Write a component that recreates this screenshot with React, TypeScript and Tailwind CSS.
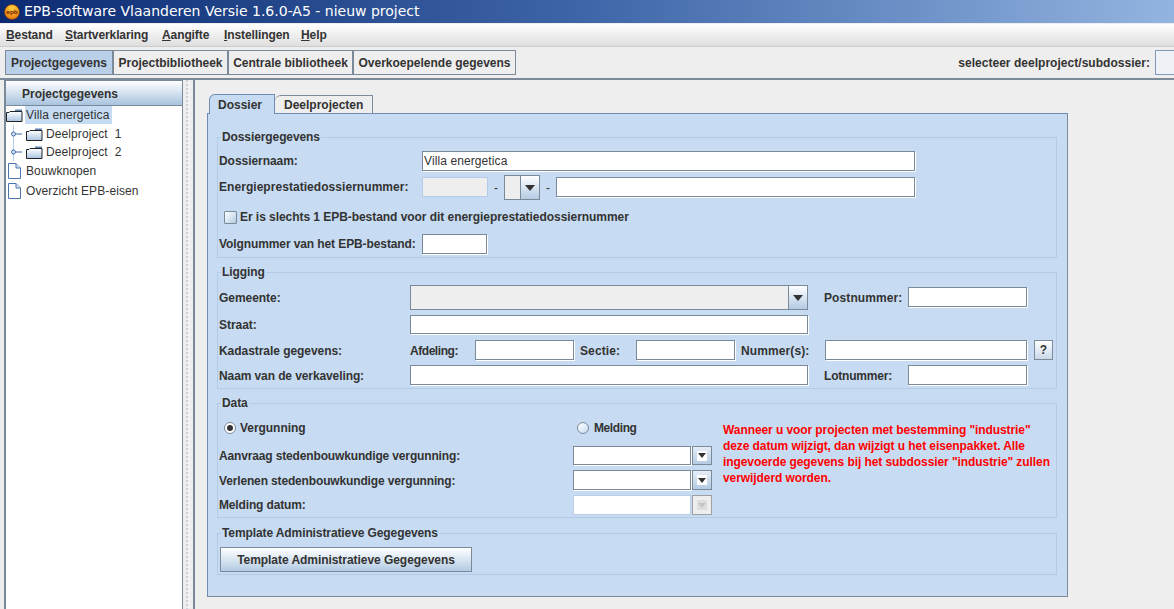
import type { ReactNode } from "react";

const line = "border-[#7a8a99]";

function Label({ children, width, className = "", tracking = "tracking-[-0.05px]" }: { children: ReactNode; width?: string; className?: string; tracking?: string }) {
  return <span className={`shrink-0 whitespace-nowrap text-[12px] font-bold text-[#333333] ${tracking} ${width ?? ""} ${className}`}>{children}</span>;
}

function Input({ width, height = "h-[20px]", value, className = "" }: { width: string; height?: string; value?: string; className?: string }) {
  return (
    <div className={`box-border flex shrink-0 items-center border ${line} bg-white pl-[1px] text-[12px] tracking-[0.1px] text-[#333333] shadow-[1px_1px_0_#ffffff] ${width} ${height} ${className}`}>
      {value}
    </div>
  );
}

function Arrow({ disabled = false, small = false }: { disabled?: boolean; small?: boolean }) {
  return (
    <svg width={small ? 8 : 10} height={small ? 5 : 6} viewBox="0 0 10 6" className="shrink-0" preserveAspectRatio="none">
      <path d="M0 0h10L5 6z" fill={disabled ? "#c4c4c4" : "#333333"} />
    </svg>
  );
}

function ArrowButton({ height, disabled = false }: { height: string; disabled?: boolean }) {
  return (
    <div className={`box-border flex w-[20px] shrink-0 items-center justify-center border ${disabled ? "border-[#a0a0a0] bg-[#eeeeee]" : `${line} bg-gradient-to-b from-[#e6eef7] to-[#b3cbe3]`} ${height}`}>
      <div className={`flex size-[10px] items-center justify-center ${disabled ? "bg-[#dedede]" : "bg-white"}`}>
        <Arrow disabled={disabled} small />
      </div>
    </div>
  );
}

function DateField({ disabled = false, height }: { disabled?: boolean; height: string }) {
  return (
    <div className="flex items-center gap-[1px]">
      <div className={`box-border w-[118px] border bg-white ${disabled ? "border-[#b8cfe6]" : `${line} shadow-[1px_1px_0_#ffffff]`} ${height}`} />
      <ArrowButton height={height} disabled={disabled} />
    </div>
  );
}

function Group({ title, height, children }: { title: string; height: string; children: ReactNode }) {
  return (
    <fieldset className={`m-0 box-border min-w-0 w-[840px] border border-[#b3cbe6] p-0 pl-px ${height}`}>
      <legend className="ml-[2px] h-[13px] px-px text-[12px] leading-[13px] font-bold tracking-[-0.1px] text-[#333333]">{title}</legend>
      {children}
    </fieldset>
  );
}

function Folder() {
  return (
    <svg width="17" height="13" viewBox="0 0 17 13" className="shrink-0">
      <defs>
        <linearGradient id="folderFill" x1="0" y1="0" x2="0" y2="1">
          <stop offset="0" stopColor="#ffffff" />
          <stop offset="1" stopColor="#a9c4e2" />
        </linearGradient>
      </defs>
      <path d="M9 0.500h7v2.500h-7z" fill="#5d82b5" />
      <path d="M0.500 3.500h2.500l1-1h12v10h-15.500z" fill="url(#folderFill)" stroke="#222222" />
    </svg>
  );
}

function Page() {
  return (
    <svg width="13" height="16" viewBox="0 0 13 16" className="shrink-0">
      <path d="M0.500 0.500h7.500l4.500 4.500v10.500h-12z" fill="#ffffff" stroke="#4c76ab" />
      <path d="M8 0.500v4.500h4.500" fill="#d7e5f4" stroke="#4c76ab" />
    </svg>
  );
}

function TreeHandle() {
  return (
    <svg width="14" height="18" viewBox="0 0 14 18" className="shrink-0">
      <path d="M3.500 0v18" stroke="#b3cbe6" />
      <path d="M6 9h6" stroke="#3f66a8" />
      <circle cx="3.500" cy="9" r="2" fill="#dbe7f5" stroke="#3f66a8" />
    </svg>
  );
}

function Logo() {
  return (
    <svg width="16" height="16" viewBox="0 0 16 16" className="shrink-0">
      <defs>
        <radialGradient id="logoFill" cx="0.500" cy="0.250" r="0.800">
          <stop offset="0" stopColor="#ffd040" />
          <stop offset="1" stopColor="#e8720c" />
        </radialGradient>
      </defs>
      <circle cx="8" cy="8" r="7.500" fill="url(#logoFill)" stroke="#6b3a12" strokeWidth="0.700" />
      <text x="8" y="10" textAnchor="middle" fontSize="5.500" fontWeight="700" fill="#7a2d05">epb</text>
    </svg>
  );
}

const menuItems = [
  { key: "B", rest: "estand", cls: "w-[59px]" },
  { key: "S", rest: "tartverklaring", cls: "w-[97px]" },
  { key: "A", rest: "angifte", cls: "w-[62px]" },
  { key: "I", rest: "nstellingen", cls: "w-[77px]" },
  { key: "H", rest: "elp", cls: "w-[30px]" },
];

const toolbarItems = [
  { text: "Projectgegevens", cls: "w-[108px] bg-[#b9d0e8]" },
  { text: "Projectbibliotheek", cls: "w-[115px] bg-[#eeeeee]" },
  { text: "Centrale bibliotheek", cls: "w-[125px] bg-[#eeeeee]" },
  { text: "Overkoepelende gegevens", cls: "w-[163px] bg-[#eeeeee]" },
];

export default function App() {
  return (
    <div className="flex h-[609px] w-[1174px] flex-col overflow-hidden bg-[#eeeeee] font-['Liberation_Sans',Arial,sans-serif]">
      <header className="flex h-[23px] shrink-0 items-center gap-[4px] bg-gradient-to-r from-[#0c2a72] via-[#3f66a8] to-[#94b4e0] pl-[4px] font-['DejaVu_Sans',sans-serif] text-[14px] text-white">
        <Logo />
        <span className="whitespace-nowrap">EPB-software Vlaanderen Versie 1.6.0-A5 - nieuw project</span>
      </header>

      <nav className="mt-px flex h-[22px] shrink-0 items-center bg-gradient-to-b from-white to-[#dedede] pl-[6px] text-[12px] font-bold tracking-[-0.1px] text-[#333333]">
        {menuItems.map((item) => (
          <span key={item.key} className={`whitespace-nowrap ${item.cls}`}>
            <span className="underline">{item.key}</span>
            {item.rest}
          </span>
        ))}
      </nav>

      <div className={`box-border flex h-[34px] shrink-0 items-start justify-between border-t border-t-[#cccccc] border-b-2 ${line} pt-[3px] pl-[5px]`}>
        <div className="flex">
          {toolbarItems.map((item) => (
            <button key={item.text} className={`box-border h-[25px] border ${line} pt-px text-center text-[12px] font-bold whitespace-nowrap text-[#333333] ${item.cls}`}>
              {item.text}
            </button>
          ))}
        </div>
        <div className="mr-[-21px] flex h-[25px] items-center gap-[5px]">
          <Label tracking="tracking-[0.03px]" className="pt-px">selecteer deelproject/subdossier:</Label>
          <div className="box-border h-[25px] w-[40px] border border-[#7f9ab8] bg-[#eef1f6]" />
        </div>
      </div>

      <div className="flex min-h-0 flex-1">
        <aside className={`ml-[4px] flex w-[179px] shrink-0 flex-col border-t border-r border-l-2 ${line} bg-white`}>
          <div className={`flex h-[25px] shrink-0 items-center border-b ${line} bg-gradient-to-b from-white to-[#a9c3de] pt-px pl-[16px] text-[12px] font-bold text-[#333333]`}>
            Projectgegevens
          </div>
          <ul className="text-[12px] tracking-[0.1px] text-[#333333]">
            <li className="flex h-[18px] items-center gap-[2px]">
              <Folder />
              <span className="flex h-[18px] items-center bg-[#c6dcf2] pr-[3px] pl-px">Villa energetica</span>
            </li>
            <li className="mt-px flex h-[18px] items-center gap-[2px] pl-[4px]">
              <TreeHandle />
              <Folder />
              <span className="ml-px">Deelproject&nbsp; 1</span>
            </li>
            <li className="flex h-[18px] items-center gap-[2px] pl-[4px]">
              <TreeHandle />
              <Folder />
              <span className="ml-px">Deelproject&nbsp; 2</span>
            </li>
            <li className="flex h-[19px] items-center gap-[5px] pl-[2px]">
              <Page />
              Bouwknopen
            </li>
            <li className="mt-px flex h-[19px] items-center gap-[5px] pl-[2px]">
              <Page />
              Overzicht EPB-eisen
            </li>
          </ul>
        </aside>

        <div className="flex w-[10px] shrink-0 justify-center">
          <div className="h-full w-[4px] bg-[radial-gradient(circle_at_1px_1px,#a3b6cc_0.600px,transparent_0.800px),radial-gradient(circle_at_3px_3px,#ffffff_0.600px,transparent_0.800px)] bg-[length:4px_4px]" />
        </div>

        <main className={`flex-1 border-l-2 ${line} pt-[14px] pl-[12px]`}>
          <div className="ml-[2px] flex h-[19px] items-end">
            <div className="relative z-10 box-border flex h-[20px] w-[66px] translate-y-px items-center rounded-tl-[6px] border border-b-0 border-[#6f8cb5] bg-[#c7dcf2] pl-[8px] text-[12px] font-bold text-[#333333]">
              Dossier
            </div>
            <div className={`box-border flex h-[18px] w-[98px] items-center rounded-tl-[6px] border border-b-0 border-l-0 ${line} bg-[#eeeeee] pl-[9px] text-[12px] font-bold text-[#333333]`}>
              Deelprojecten
            </div>
          </div>

          <section className="box-border h-[484px] w-[861px] border border-[#6f8cb5] border-r-[#7a8a99] border-b-[#7a8a99] bg-[#c7dcf2] pt-[17px] pl-[9px]">
            <Group title="Dossiergegevens" height="h-[127px]">
              <div className="mt-[7px] flex h-[20px] items-center">
                <Label width="w-[203px]">Dossiernaam:</Label>
                <Input width="w-[493px]" value="Villa energetica" />
              </div>
              <div className="mt-[4px] flex h-[25px] items-center">
                <Label width="w-[203px]" className="pb-px" tracking="tracking-[0.05px]">Energieprestatiedossiernummer:</Label>
                <div className="mb-px box-border h-[20px] w-[66px] border border-[#b3cbe6] bg-[#eeeeee]" />
                <span className="w-[16px] text-center text-[12px] text-[#333333]">-</span>
                <div className={`box-border flex h-[25px] w-[36px] border ${line}`}>
                  <div className={`w-[16px] border-r ${line} bg-[#eeeeee]`} />
                  <div className="flex flex-1 items-center justify-center bg-gradient-to-b from-white to-[#b3cbe3]">
                    <Arrow />
                  </div>
                </div>
                <span className="w-[16px] text-center text-[12px] text-[#333333]">-</span>
                <Input width="w-[359px]" className="mb-px" />
              </div>
              <div className="mt-[9px] flex h-[16px] items-center pl-[5px]">
                <div className="box-border size-[13px] rounded-[1px] border border-[#7a8a99] bg-gradient-to-br from-white to-[#b3cbe3]" />
                <Label className="ml-[3px]">Er is slechts 1 EPB-bestand voor dit energieprestatiedossiernummer</Label>
              </div>
              <div className="mt-[9px] flex h-[20px] items-center">
                <Label width="w-[203px]" tracking="tracking-[-0.1px]">Volgnummer van het EPB-bestand:</Label>
                <Input width="w-[65px]" />
              </div>
            </Group>

            <div className="h-[8px]" />

            <Group title="Ligging" height="h-[123px]">
              <div className="mt-[6px] flex h-[25px] items-center">
                <Label width="w-[191px]">Gemeente:</Label>
                <div className={`box-border flex h-[25px] w-[398px] border ${line}`}>
                  <div className={`flex-1 border-r ${line} bg-[#eeeeee]`} />
                  <div className="flex w-[18px] items-center justify-center bg-gradient-to-b from-white to-[#b3cbe3]">
                    <Arrow />
                  </div>
                </div>
                <Label width="w-[84px]" className="ml-[16px]" tracking="tracking-[0.1px]">Postnummer:</Label>
                <Input width="w-[119px]" className="mb-px" />
              </div>
              <div className="mt-[5px] flex h-[19px] items-center">
                <Label width="w-[191px]">Straat:</Label>
                <Input width="w-[398px]" height="h-[19px]" />
              </div>
              <div className="mt-[6px] flex h-[20px] items-center">
                <Label width="w-[191px]" className="pt-[2px]">Kadastrale gegevens:</Label>
                <Label width="w-[65px]" className="pt-[2px]" tracking="tracking-[-0.45px]">Afdeling:</Label>
                <Input width="w-[99px]" />
                <Label width="w-[56px]" className="ml-[6px] pt-[2px]" tracking="tracking-[0.1px]">Sectie:</Label>
                <Input width="w-[99px]" />
                <Label width="w-[84px]" className="ml-[6px] pt-[2px]" tracking="tracking-[0.1px]">Nummer(s):</Label>
                <Input width="w-[202px]" />
                <button className={`ml-[7px] box-border h-[20px] w-[19px] border ${line} bg-gradient-to-b from-white to-[#c8d8e8] text-[12px] font-bold text-[#333333]`}>?</button>
              </div>
              <div className="mt-[5px] flex h-[20px] items-center">
                <Label width="w-[191px]" className="pt-[2px]" tracking="tracking-[-0.1px]">Naam van de verkaveling:</Label>
                <Input width="w-[398px]" />
                <Label width="w-[84px]" className="ml-[16px] pt-[2px]" tracking="tracking-[-0.2px]">Lotnummer:</Label>
                <Input width="w-[119px]" />
              </div>
            </Group>

            <div className="h-[8px]" />

            <Group title="Data" height="h-[121px]">
              <div className="flex">
                <div className="w-[504px]">
                  <div className="mt-[10px] flex h-[16px] items-center">
                    <div className="ml-[5px] flex w-[353px] items-center">
                      <div className="box-border flex size-[12px] items-center justify-center rounded-full border border-[#7a8a99] bg-white">
                        <div className="size-[6px] rounded-full bg-[#333333]" />
                      </div>
                      <Label className="ml-[4px]">Vergunning</Label>
                    </div>
                    <div className="box-border size-[12px] rounded-full border border-[#7a8a99] bg-gradient-to-br from-white to-[#c7dcf2]" />
                    <Label className="ml-[5px]" tracking="tracking-[-0.4px]">Melding</Label>
                  </div>
                  <div className="mt-[10px] flex h-[19px] items-center">
                    <Label width="w-[354px]" tracking="tracking-[-0.15px]">Aanvraag stedenbouwkundige vergunning:</Label>
                    <DateField height="h-[19px]" />
                  </div>
                  <div className="mt-[5px] flex h-[20px] items-center">
                    <Label width="w-[354px]" className="pt-[2px]" tracking="tracking-[-0.15px]">Verlenen stedenbouwkundige vergunning:</Label>
                    <DateField height="h-[20px]" />
                  </div>
                  <div className="mt-[5px] flex h-[20px] items-center">
                    <Label width="w-[354px]" tracking="tracking-[-0.15px]">Melding datum:</Label>
                    <DateField disabled height="h-[20px]" />
                  </div>
                </div>
                <p className="mt-[12px] text-[12px] leading-[16px] font-bold tracking-[-0.08px] whitespace-nowrap text-[#ff0000]">
                  Wanneer u voor projecten met bestemming "industrie"
                  <br />
                  deze datum wijzigt, dan wijzigt u het eisenpakket. Alle
                  <br />
                  ingevoerde gegevens bij het subdossier "industrie" zullen
                  <br />
                  verwijderd worden.
                </p>
              </div>
            </Group>

            <div className="h-[9px]" />

            <Group title="Template Administratieve Gegegevens" height="h-[48px]">
              <button className={`mt-[7px] ml-px box-border h-[25px] w-[252px] border ${line} bg-gradient-to-b from-white to-[#b3cbe3] text-[12px] font-bold tracking-[-0.05px] text-[#333333]`}>
                Template Administratieve Gegegevens
              </button>
            </Group>
          </section>
        </main>
      </div>
    </div>
  );
}
